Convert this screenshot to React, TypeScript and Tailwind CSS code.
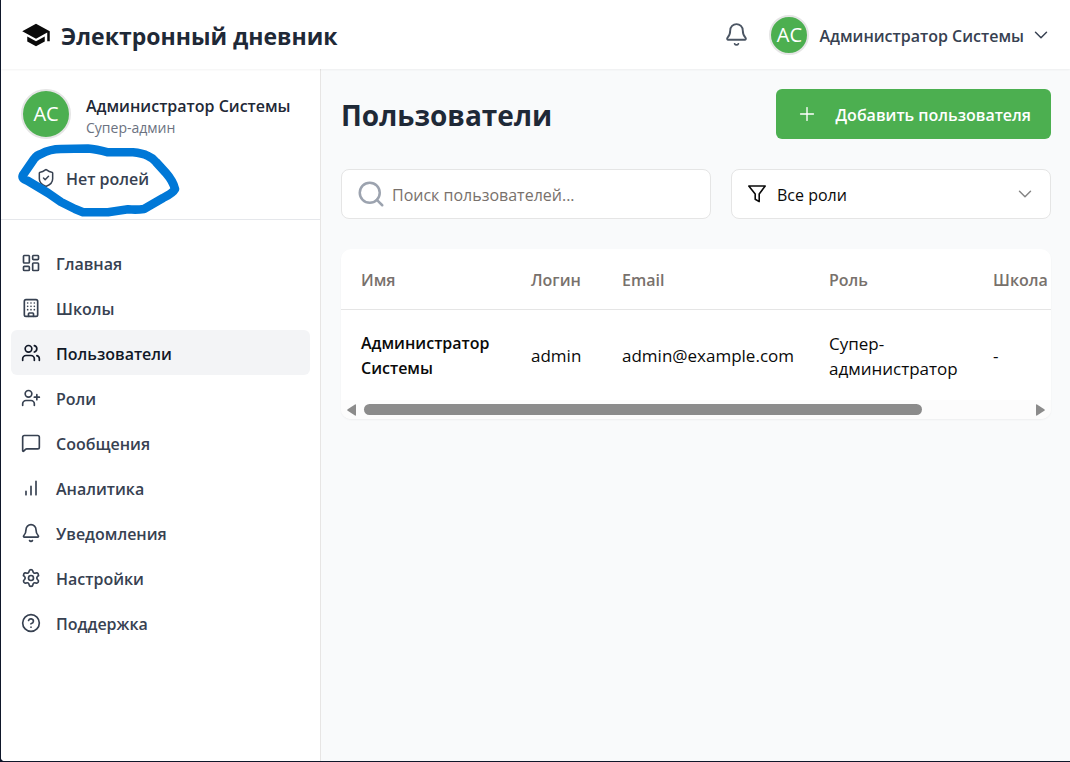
import React from "react";
import {
  Bell, Building, ChevronDown, CircleHelp, LayoutDashboard,
  MessageSquare, Plus, Search, Settings, ShieldCheck, UserPlus, Users,
} from "lucide-react";

type IconProps = { className?: string; strokeWidth?: number | string };
type NavItem = { label: string; icon: React.ComponentType<IconProps>; active?: boolean };

function BarsIcon({ className, strokeWidth = 2 }: IconProps) {
  return (
    <svg viewBox="0 0 24 24" className={className} fill="none" stroke="currentColor" strokeWidth={strokeWidth} strokeLinecap="round" aria-hidden="true">
      <path d="M6 20v-4M12 20V10M18 20V4" />
    </svg>
  );
}

const navItems: NavItem[] = [
  { label: "Главная", icon: LayoutDashboard },
  { label: "Школы", icon: Building },
  { label: "Пользователи", icon: Users, active: true },
  { label: "Роли", icon: UserPlus },
  { label: "Сообщения", icon: MessageSquare },
  { label: "Аналитика", icon: BarsIcon },
  { label: "Уведомления", icon: Bell },
  { label: "Настройки", icon: Settings },
  { label: "Поддержка", icon: CircleHelp },
];

function Logo() {
  return (
    <svg viewBox="0 0 24 24" className="size-[30px] shrink-0" fill="#0a0a0a" aria-hidden="true">
      <path d="M5 13.18v4L12 21l7-3.82v-4L12 17l-7-3.82zM12 3 1 9l11 6 9-4.91V17h2V9L12 3z" />
    </svg>
  );
}

function FilterIcon() {
  return (
    <svg viewBox="0 0 20 20" className="size-5 shrink-0" fill="none" stroke="#0a0a0a" strokeWidth="1.6" strokeLinejoin="round" aria-hidden="true">
      <path d="M1.8 2H18.2L12.2 10V17.6L8.2 15.2V10Z" />
    </svg>
  );
}

function RoleMark() {
  return (
    <svg viewBox="0 0 162 74" className="pointer-events-none absolute left-[17px] top-[144px] h-[74px] w-[162px]" fill="none" stroke="#0078d7" strokeWidth="8.6" strokeLinecap="round" strokeLinejoin="round" aria-hidden="true">
      <path d="M5 31 L16 15 Q19 11 23 10 Q32 5 43 5 L70 4.500 Q78 5 90 8.300 H115 Q124 9 130 12 Q135 14 138 18 L148 29 Q155 37 157 45 Q155 49 145 54 L126 65 Q119 66 110 65.300 L90 68.300 H65 L57 65 L43 58 L30 49 L10 37 Q3 35 5 31 Z" />
    </svg>
  );
}

function Sidebar() {
  return (
    <aside className="flex w-[320px] shrink-0 flex-col border-r border-[#e7e5e4] bg-white">
      <div className="flex h-[151px] flex-col border-b border-[#e5e7eb] px-5 pt-5">
        <div className="flex items-center gap-[15px]">
          <span className="flex size-[50px] shrink-0 items-center justify-center rounded-full border-2 border-[#e5e5e5] bg-[#4caf50] text-xl text-white">АС</span>
          <div className="whitespace-nowrap pt-1">
            <p className="text-base font-semibold leading-6 text-[#1f2937]">Администратор Системы</p>
            <p className="text-sm leading-5 text-[#6b7280]">Супер-админ</p>
          </div>
        </div>
        <div className="mt-[26px] flex items-center gap-2.5 pl-[15px] text-[#374151]">
          <ShieldCheck className="size-5" strokeWidth={1.8} />
          <span className="pt-0.5 text-base font-semibold leading-6">Нет ролей</span>
        </div>
      </div>
      <nav className="px-2.5 pt-5">
        {navItems.map(({ label, icon: Icon, active }) => (
          <a
            key={label}
            href="#"
            aria-current={active ? "page" : undefined}
            className={`flex h-[45px] items-center gap-[15px] rounded-md px-2.5 text-base font-semibold ${active ? "bg-[#f3f4f6] text-[#111827]" : "text-[#374151]"}`}
          >
            <Icon className="size-5" strokeWidth={2} />
            <span className="pt-0.5">{label}</span>
          </a>
        ))}
      </nav>
    </aside>
  );
}

function UsersTable() {
  const head = "h-[60px] px-5 pt-0.5 text-left text-base font-semibold text-[#78716c]";
  const cell = "h-[91px] px-5 pt-0.5 align-middle";
  return (
    <div className="overflow-hidden rounded-[10px] bg-white shadow-[0_1px_2px_rgba(0,0,0,0.05)]">
      <div className="overflow-hidden">
        <table className="w-[888px] table-fixed border-collapse text-[17px] leading-[25px] text-[#0a0a0a]">
          <colgroup>
            <col className="w-[170px]" />
            <col className="w-[91px]" />
            <col className="w-[207px]" />
            <col className="w-[164px]" />
            <col />
          </colgroup>
          <thead>
            <tr className="border-b border-[#e5e5e5]">
              <th className={head}>Имя</th>
              <th className={head}>Логин</th>
              <th className={head}>Email</th>
              <th className={head}>Роль</th>
              <th className={head}>Школа</th>
            </tr>
          </thead>
          <tbody>
            <tr>
              <td className={`${cell} text-base leading-[25px] font-semibold`}>Администратор Системы</td>
              <td className={cell}>admin</td>
              <td className={cell}>admin@example.com</td>
              <td className={cell}>Супер-администратор</td>
              <td className={cell}>-</td>
            </tr>
          </tbody>
        </table>
      </div>
      <div className="flex h-[19px] items-center gap-2 bg-[#fcfcfc] px-1.5" aria-hidden="true">
        <svg viewBox="0 0 9 12" className="h-3 w-[9px]" fill="#8b8b8b"><path d="M9 1v10q0 1-1 .6L.7 6.8q-1-.8 0-1.6L8 .4Q9 0 9 1z" /></svg>
        <div className="flex-1"><div className="h-[11px] w-[84%] rounded-full bg-[#8b8b8b]" /></div>
        <svg viewBox="0 0 9 12" className="h-3 w-[9px]" fill="#8b8b8b"><path d="M0 1v10q0 1 1 .6l7.3-4.8q1-.8 0-1.6L1 .4Q0 0 0 1z" /></svg>
      </div>
    </div>
  );
}

export default function App() {
  return (
    <div className="min-h-screen bg-[#0f172a] pb-px pl-px font-['Open_Sans','Noto_Sans',sans-serif]">
      <div className="relative flex min-h-[calc(100vh-1px)] flex-col overflow-hidden rounded-bl bg-[#f9fafb]">
        <header className="relative flex h-[69px] shrink-0 items-center justify-between bg-white pl-5 pr-[18px] shadow-[0_1px_2px_rgba(0,0,0,0.05)]">
          <div className="flex items-center gap-2.5">
            <Logo />
            <span className="pt-0.5 text-[23px] font-bold leading-8 text-[#1f2937]">Электронный дневник</span>
          </div>
          <div className="flex items-center gap-5">
            <button type="button" aria-label="Уведомления" className="text-[#4b5563]">
              <Bell className="size-[25px]" strokeWidth={1.8} />
            </button>
            <button type="button" className="flex items-center text-base font-semibold text-[#374151]">
              <span className="mr-2.5 flex size-10 items-center justify-center rounded-full border-2 border-[#e5e5e5] bg-[#4caf50] text-xl font-normal text-white">АС</span>
              <span className="pt-0.5">Администратор Системы</span>
              <ChevronDown className="ml-1.5 size-[22px]" strokeWidth={1.6} />
            </button>
          </div>
        </header>
        <div className="flex flex-1">
          <Sidebar />
          <main className="min-w-0 flex-1 py-5 pl-5 pr-[19px]">
            <div className="flex items-center justify-between">
              <h1 className="pt-0.5 text-[28px] font-bold leading-10 text-[#1f2937]">Пользователи</h1>
              <button type="button" className="flex h-[50px] items-center gap-[18px] rounded-md bg-[#4caf50] px-5 text-base font-semibold text-white">
                <Plus className="size-[22px]" strokeWidth={1.5} />
                <span className="pt-0.5">Добавить пользователя</span>
              </button>
            </div>
            <div className="my-[30px] flex gap-5">
              <label className="flex h-[50px] min-w-0 flex-1 items-center gap-1.5 rounded-lg border border-[#e5e5e5] bg-white px-3.5">
                <Search className="size-[30px] shrink-0 text-[#9ca3af]" strokeWidth={2} />
                <input type="text" aria-label="Поиск пользователей" placeholder="Поиск пользователей..." className="min-w-0 flex-1 bg-transparent pt-0.5 text-base outline-none placeholder:text-[#78716c]" />
              </label>
              <label className="flex h-[50px] w-[320px] items-center gap-2.5 rounded-lg border border-[#e5e5e5] bg-white pl-[15px] pr-3.5">
                <FilterIcon />
                <select aria-label="Роль" className="min-w-0 flex-1 appearance-none bg-transparent pt-0.5 text-base text-[#0a0a0a] outline-none">
                  <option>Все роли</option>
                </select>
                <ChevronDown className="size-[22px] text-[#858585]" strokeWidth={1.6} />
              </label>
            </div>
            <UsersTable />
          </main>
        </div>
        <RoleMark />
      </div>
    </div>
  );
}
